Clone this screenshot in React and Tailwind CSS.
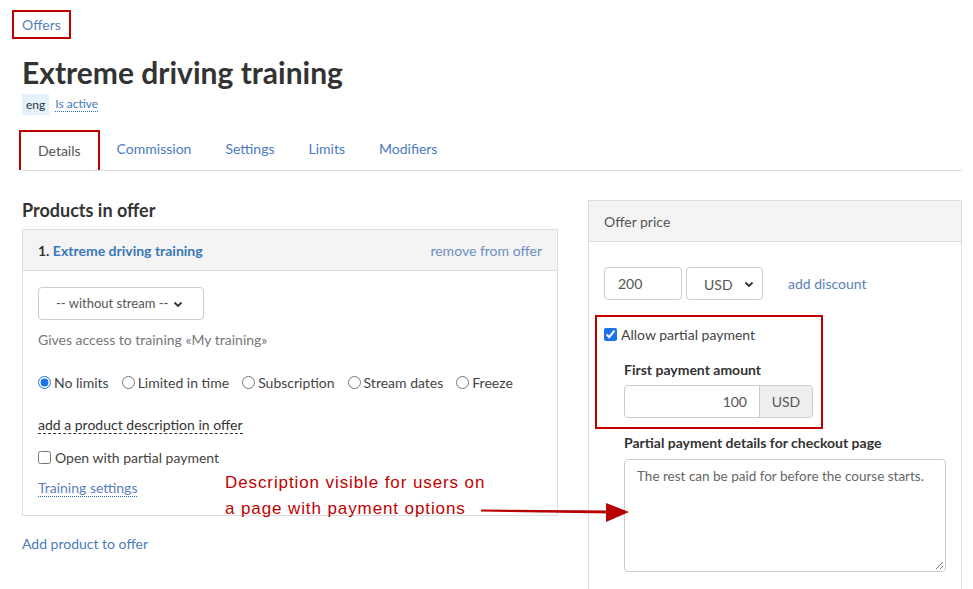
import React, { useState } from "react";

const font = { fontFamily: "Lato, 'Open Sans', sans-serif" };

const tabs = ["Details", "Commission", "Settings", "Limits", "Modifiers"];
const limits = ["No limits", "Limited in time", "Subscription", "Stream dates", "Freeze"];

const Chevron = ({ right = "right-[12px]" }) => (
  <svg width="10" height="10" viewBox="0 0 10 10" className={`absolute ${right} top-1/2 -translate-y-1/2`}>
    <path d="M1.5 3.5 L5 7 L8.5 3.5" fill="none" stroke="#333" strokeWidth="1.8" />
  </svg>
);

const App = () => {
  const [limit, setLimit] = useState("No limits");
  const [partial, setPartial] = useState(true);

  return (
    <div className="relative h-[589px] overflow-hidden bg-white pl-[22px] pr-[11px] text-[14px] text-[#333]" style={font}>
      <div className="pt-[10px]">
        <span className="-ml-[10px] inline-block border-2 border-[#c00000] px-[8px] py-[4px] leading-[17px] text-[#5b7fb8]">
          Offers
        </span>
      </div>

      <h1 className="mt-[15px] text-[30px] font-bold leading-[36px] text-[#333]">Extreme driving training</h1>
      <div className="mt-[4px] flex items-center gap-[6px] text-[12px]">
        <span className="bg-[#e4f0fb] px-[4px] leading-[21px] text-[#333]">eng</span>
        <span className="border-b border-dotted border-[#2a6fb3] leading-[14px] text-[#4a7bbd]">Is active</span>
      </div>

      <div className="mt-[15px] flex border-b border-[#ddd]">
        {tabs.map((t, i) => (
          <div
            key={t}
            className={`px-[17px] leading-[38px] ${
              i === 0 ? "-ml-[3px] border-2 border-b-0 border-[#c00000] px-[16px] text-[#555]" : "text-[#4a7bbd]"
            }`}
          >
            {t}
          </div>
        ))}
      </div>

      <div className="mt-[29px] flex gap-[30px]">
        <div className="w-[536px]">
          <h2 className="text-[18px] font-bold leading-[20px]">Products in offer</h2>
          <div className="mt-[9px] border border-[#ddd]">
            <div className="flex h-[41px] items-center justify-between border-b border-[#ddd] bg-[#f4f4f4] px-[15px]">
              <span className="font-bold">
                1. <span className="text-[#3a78b8]">Extreme driving training</span>
              </span>
              <span className="text-[#6b8fbf]">remove from offer</span>
            </div>
            <div className="px-[15px] pb-[17px] pt-[16px]">
              <div className="relative h-[33px] w-[166px] rounded-[4px] border border-[#ccc] bg-white">
                <span className="absolute left-[17px] top-1/2 -translate-y-1/2 text-[13px] text-[#555]">
                  -- without stream --
                </span>
                <Chevron right="right-[20px]" />
              </div>
              <p className="mt-[11px] leading-[17px] text-[#777]">Gives access to training «My training»</p>
              <div className="mt-[26px] flex items-center gap-[13px]">
                {limits.map((l) => (
                  <label key={l} className="flex items-center gap-[3px] leading-[17px] text-[#444]">
                    <input
                      type="radio"
                      name="limit"
                      checked={limit === l}
                      onChange={() => setLimit(l)}
                      className="m-0 h-[13px] w-[13px] accent-[#1a73e8]"
                    />
                    {l}
                  </label>
                ))}
              </div>
              <div className="mt-[23px]">
                <span className="border-b border-dashed border-[#333] leading-[17px] text-[#333]">
                  add a product description in offer
                </span>
              </div>
              <label className="mt-[14px] flex items-center gap-[4px] leading-[17px] text-[#444]">
                <input type="checkbox" className="m-0 h-[13px] w-[13px]" />
                Open with partial payment
              </label>
              <div className="mt-[11px]">
                <span className="border-b border-dotted border-[#2a6fb3] leading-[17px] text-[#5b7fb8]">
                  Training settings
                </span>
              </div>
            </div>
          </div>
          <p className="mt-[19px] leading-[17px] text-[#4a7bbd]">Add product to offer</p>
        </div>

        <div className="h-[420px] w-[374px] border border-[#ddd]">
          <div className="flex h-[41px] items-center border-b border-[#ddd] bg-[#f4f4f4] px-[15px] text-[#555]">
            Offer price
          </div>
          <div className="px-[15px] pt-[25px]">
            <div className="flex items-center">
              <div className="flex h-[33px] w-[78px] items-center rounded-[4px] border border-[#ccc] px-[13px] text-[#555]">
                200
              </div>
              <div className="relative ml-[4px] h-[33px] w-[77px] rounded-[4px] border border-[#ccc] text-[#555]">
                <span className="absolute left-[17px] top-1/2 -translate-y-1/2">USD</span>
                <Chevron right="right-[8px]" />
              </div>
              <span className="ml-[25px] text-[#5b7fb8]">add discount</span>
            </div>

            <div className="relative mt-[26px]">
              <div className="pointer-events-none absolute -left-[9px] -top-[11px] h-[114px] w-[228px] border-2 border-[#c00000]" />
              <label className="flex items-center gap-[4px] leading-[17px] text-[#444]">
                <input
                  type="checkbox"
                  checked={partial}
                  onChange={(e) => setPartial(e.target.checked)}
                  className="m-0 h-[13px] w-[13px] accent-[#1a73e8]"
                />
                Allow partial payment
              </label>
              <div className="pl-[20px]">
                <p className="mt-[18px] font-bold leading-[17px]">First payment amount</p>
                <div className="mt-[7px] flex h-[33px] w-[189px] rounded-[4px] border border-[#ccc]">
                  <div className="flex flex-1 items-center justify-end pr-[12px] text-[#555]">100</div>
                  <div className="flex w-[53px] items-center justify-center rounded-r-[4px] border-l border-[#ccc] bg-[#eee] text-[#555]">
                    USD
                  </div>
                </div>
                <p className="mt-[16px] font-bold leading-[17px]">Partial payment details for checkout page</p>
                <div className="relative mt-[8px] h-[113px] w-[322px] whitespace-nowrap rounded-[4px] border border-[#ccc] px-[12px] pt-[6px] text-[13.5px] text-[#666]">
                  The rest can be paid for before the course starts.
                  <svg width="10" height="10" viewBox="0 0 10 10" className="absolute bottom-[1px] right-[1px]">
                    <path d="M9 2 L2 9 M9 6 L6 9" stroke="#777" strokeWidth="1" />
                  </svg>
                </div>
              </div>
            </div>
          </div>
        </div>
      </div>

      <div
        className="pointer-events-none absolute left-[225px] top-[470px] text-[17px] leading-[26px] tracking-[0.9px] text-[#c00000]"
        style={{ fontFamily: "'Liberation Sans', Arial, sans-serif" }}
      >
        <p>Description visible for users on</p>
        <p>a page with payment options</p>
      </div>
      <svg className="pointer-events-none absolute left-[478px] top-[500px]" width="155" height="26" viewBox="0 0 155 26">
        <path d="M3 9.5 L132 10.5 L133 13.5 L3 11.5 Z" fill="#b80000" />
        <path d="M128 3 L151 12 L128 22 Z" fill="#b80000" />
      </svg>
    </div>
  );
};

export default App;
